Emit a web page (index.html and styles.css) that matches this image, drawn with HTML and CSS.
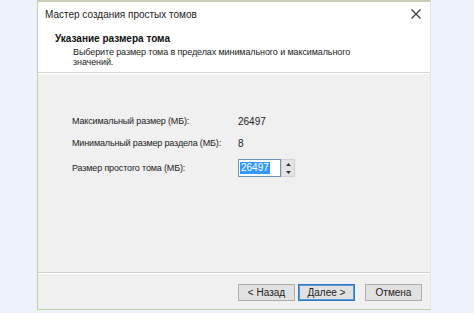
FILE: index.html
```html
<!DOCTYPE html>
<html lang="ru">
<head>
<meta charset="utf-8">
<link rel="stylesheet" href="styles.css">
</head>
<body>
<div class="window">
  <div class="titlebar">
    <span class="title">Мастер создания простых томов</span>
    <svg class="close" width="10" height="10" viewBox="0 0 10 10"><path d="M0.5 0.5 L9.5 9.5 M9.5 0.5 L0.5 9.5" stroke="#333" stroke-width="1.1" fill="none"/></svg>
  </div>
  <div class="header">
    <div class="h-title">Указание размера тома</div>
    <div class="h-desc">Выберите размер тома в пределах минимального и максимального значений.</div>
  </div>
  <div class="content">
    <div class="row"><span class="label">Максимальный размер (МБ):</span><span class="value">26497</span></div>
    <div class="row"><span class="label">Минимальный размер раздела (МБ):</span><span class="value">8</span></div>
    <div class="row"><span class="label">Размер простого тома (МБ):</span>
      <span class="spin">
        <span class="input"><span class="sel">26497</span></span>
        <span class="arrows">
          <span class="arr"><svg width="5" height="3" viewBox="0 0 5 3"><path d="M0 3 L2.5 0 L5 3Z" fill="#333"/></svg></span>
          <span class="arr"><svg width="5" height="3" viewBox="0 0 5 3"><path d="M0 0 L2.5 3 L5 0Z" fill="#333"/></svg></span>
        </span>
      </span>
    </div>
  </div>
  <div class="footer">
    <button class="btn">&lt; Назад</button>
    <button class="btn default">Далее &gt;</button>
    <button class="btn cancel">Отмена</button>
  </div>
</div>
</body>
</html>
```
FILE: styles.css
```css
html, body { margin: 0; padding: 0; }
body {
  background: #eef3fb;
  width: 474px;
  height: 313px;
  overflow: hidden;
  font-family: "Liberation Sans", Arial, sans-serif;
  font-size: 10px;
  color: #222;
}
.window {
  margin-left: 37px;
  width: 392px;
  height: 307px;
  border-top: 2px solid #c9ceb4;
  border-left: 1px solid #b9d4aa;
  border-bottom: 1px solid #b9d4aa;
  border-right: 1px solid #e2e6ea;
  display: flex;
  flex-direction: column;
  background: #f0f0f0;
}
.titlebar {
  background: #fff;
  height: 24px;
  display: flex;
  align-items: center;
  justify-content: space-between;
  padding: 0 9px 0 7px;
  font-size: 10px;
}
.close { display: block; }
.header {
  background: #fff;
  height: 46px;
  padding-left: 17px;
  border-bottom: 1px solid #d4d4d4;
  box-shadow: 0 1px 0 #fff;
}
.h-title {
  font-weight: bold;
  margin-top: 7px;
  line-height: 12px;
  color: #111;
}
.h-desc {
  margin-left: 18px;
  margin-top: 2px;
  line-height: 10px;
  width: 285px;
  font-size: 9px;
  letter-spacing: -0.1px;
}
.content {
  flex: 1;
  padding: 42px 0 0 34px;
  display: flex;
  flex-direction: column;
  gap: 10px;
  border-bottom: 1px solid #d0d0d0;
  box-shadow: 0 1px 0 #fff;
}
.row {
  display: flex;
  align-items: center;
  height: 12px;
}
.row:last-child { height: 18px; }
.label { width: 166px; font-size: 9px; letter-spacing: -0.15px; }
.value { font-size: 10px; }
.spin { display: flex; height: 18px; }
.input {
  width: 40px;
  height: 16px;
  border: 1px solid #6a93c0;
  background: #fff;
  display: flex;
  align-items: center;
  padding-left: 1px;
}
.sel { background: #3399ff; color: #fff; line-height: 12px; padding: 0 1px; }
.arrows {
  width: 14px;
  height: 18px;
  display: flex;
  flex-direction: column;
  background: #e4e4e4;
  border: 1px solid #cfcfcf;
  box-sizing: border-box;
}
.arr { flex: 1; display: flex; align-items: center; justify-content: center; }
.footer {
  height: 36px;
  display: flex;
  align-items: center;
  justify-content: flex-end;
  padding-right: 8px;
  gap: 3px;
}
.btn {
  width: 57px;
  height: 17px;
  border: 1px solid #adadad;
  background: #e1e1e1;
  font-family: "Liberation Sans", Arial, sans-serif;
  font-size: 10px;
  color: #222;
  padding: 0;
  margin-top: 2px;
}
.btn.default { border: 1px solid #2a7ac7; box-shadow: inset 0 0 0 1px #5a9ad6; }
.btn.cancel { margin-left: 7px; }
```
